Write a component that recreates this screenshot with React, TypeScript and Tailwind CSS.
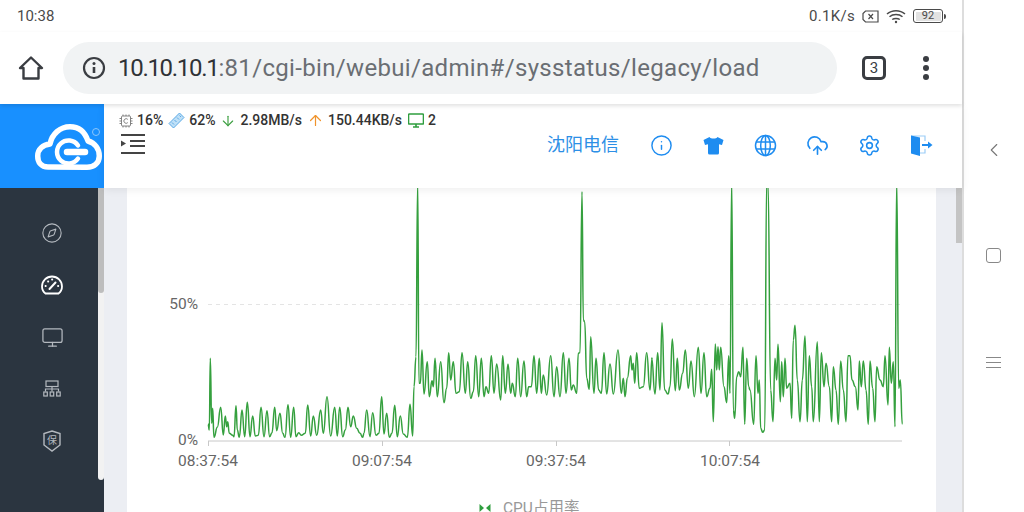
import React from "react";
import { ArrowDown, ArrowUp, ChevronLeft, CloudUpload, Compass, Info, Monitor, Settings } from "lucide-react";

const seg1: number[][] = [[24,432],[28,450],[31,235],[35,430],[38,385],[42,472],[52,442],[62,382],[70,465],[76,408],[80,440],[83,425],[88,460],[98,466],[102,470],[108,377],[112,450],[118,472],[126,390],[134,470],[142,367],[150,470],[158,408],[166,468],[175,466],[183,382],[192,470],[201,392],[209,470],[216,458],[224,382],[230,452],[240,400],[248,460],[255,472],[264,374],[272,472],[281,382],[288,470],[296,458],[304,466],[316,460],[323,375],[332,468],[340,408],[350,466],[362,390],[370,460],[381,350],[392,468],[404,382],[412,468],[419,382],[428,470],[436,450],[444,382],[452,440],[460,408],[470,445],[480,460],[488,472],[492,460],[500,390],[510,470],[518,398],[528,466],[537,460],[545,350],[552,462],[560,400],[568,472],[576,460],[584,376],[592,470],[601,408],[610,462],[622,472],[630,373],[638,468]];
const seg2: number[][] = [[42,620],[48,530],[53,10],[57,610],[61,610],[66,510],[72,642],[82,545],[88,650],[96,602],[100,620],[105,535],[112,650],[122,545],[132,668],[140,625],[146,518],[152,600],[160,545],[168,640],[178,635],[186,518],[196,640],[203,545],[212,655],[220,635],[227,527],[236,650],[244,535],[252,650],[258,620],[266,640],[274,527],[282,640],[290,552],[302,660],[308,527],[316,640],[324,552],[332,640],[337,610],[346,650],[353,535],[362,650],[372,543],[380,650],[386,620],[394,620],[402,527],[410,640],[418,535],[424,640],[430,585],[440,645],[452,527],[462,650],[470,560],[480,650],[490,518],[498,640],[507,535],[514,630],[520,615],[530,640],[535,520],[540,518],[546,35],[550,420],[554,425],[560,595],[568,628],[572,470],[582,640],[588,535],[596,630],[604,640],[612,518],[620,642],[630,552],[640,642],[654,510],[664,640],[670,595],[675,650],[682,595],[692,527],[696,570],[700,550],[704,610],[710,518],[718,625],[730,620],[740,518],[750,630],[756,535]];
const seg3: number[][] = [[0,625],[5,535],[15,642],[23,518],[30,630],[36,428],[44,630],[54,642],[60,620],[67,477],[76,632],[82,535],[88,630],[98,580],[106,510],[115,625],[123,543],[133,650],[145,502],[153,640],[162,518],[170,650],[180,625],[185,568],[190,725],[196,492],[200,570],[204,500],[208,570],[212,502],[222,620],[230,668],[236,527],[240,640],[245,5],[250,690],[254,715],[260,590],[266,575],[272,590],[279,502],[284,733],[290,535],[296,620],[300,630],[311,733],[318,527],[324,640],[328,600],[332,745],[338,757],[344,750],[350,5],[354,10],[362,630],[369,725],[375,535],[380,600],[384,493],[391,665],[395,545],[400,650],[405,535],[410,625],[420,610],[425,715],[430,480],[435,436],[442,600],[450,725],[457,600],[465,468],[472,725],[478,527],[485,620],[490,725],[502,485],[508,725],[514,518],[522,620],[528,550],[538,620],[545,725],[550,560],[558,630],[565,733],[572,543],[580,630],[588,725],[594,527],[600,527],[606,600],[616,620],[624,690],[628,543],[634,620],[640,543],[648,630],[655,733],[660,543],[668,625],[675,725],[680,560],[690,600],[700,620],[705,527],[714,675],[718,502],[724,610],[730,545],[735,740],[740,5],[746,625],[751,600],[757,733]];

const pts = [
  ...seg1.map(([x, y]) => [200 + x / 3, 280 + y / 3]),
  ...seg2.map(([x, y]) => [400 + x / 3, 180 + y / 3]),
  ...seg3.filter(([x]) => x > 0).map(([x, y]) => [650 + x / 3, 180 + y / 3]),
];

const linePath = pts
  .map(([x, y], i) => {
    if (i === 0) return `M${x.toFixed(1)} ${y.toFixed(1)}`;
    const [px, py] = pts[i - 1];
    const mx = (px + x) / 2;
    return `C${mx.toFixed(1)} ${py.toFixed(1)} ${mx.toFixed(1)} ${y.toFixed(1)} ${x.toFixed(1)} ${y.toFixed(1)}`;
  })
  .join("");

const fontCjk = "[font-family:Roboto,'Noto_Sans_CJK_SC',sans-serif]";

function HomeIcon() {
  return (
    <svg width="26" height="26" viewBox="0 0 26 26" fill="none" stroke="#3a3d42" strokeWidth="2.4" strokeLinejoin="round">
      <path d="M2 13 13 2.5 24 13h-3.5v10.5h-15V13z" />
    </svg>
  );
}

function ChipIcon() {
  return (
    <svg width="14" height="14" viewBox="0 0 14 14" fill="none" stroke="#777" strokeWidth="0.9">
      <rect x="2.5" y="2" width="9" height="10" rx="1" />
      <path d="M4 .5v1.5M7 .5v1.5M10 .5v1.500M4 12v1.500M7 12v1.500M10 12v1.500M.5 4.500H2.500M.5 7H2.500M.5 9.500H2.500M11.500 4.500H13.500M11.500 7H13.500M11.500 9.500H13.500" />
      <path d="M8.800 5.400A2.300 2.300 0 1 0 8.800 8.600" />
    </svg>
  );
}

function RamIcon() {
  return (
    <svg width="17" height="17" viewBox="0 0 17 17" fill="#bfe0f7" stroke="#5aa9e6" strokeWidth="1">
      <path d="M1 11.500 11.500 1 16 5.500 5.500 16z" />
      <path d="M4 10.500 6 12.500M6.500 8 8.500 10M9 5.500 11 7.500M11.500 3.500 13 5" />
    </svg>
  );
}

function ShirtIcon() {
  return (
    <svg width="21" height="19" viewBox="0 0 21 19" fill="#1e8cf0">
      <path d="M6.500 1C7.500 3 13.500 3 14.500 1L20.500 4 19 9l-3-.8V17a1.500 1.500 0 0 1-1.500 1.500h-8A1.500 1.500 0 0 1 5 17V8.200L2 9 .5 4z" />
    </svg>
  );
}

function GlobeIcon() {
  return (
    <svg width="23" height="23" viewBox="0 0 23 23" fill="none" stroke="#1e8cf0" strokeWidth="1.500">
      <circle cx="11.500" cy="11.500" r="10" />
      <ellipse cx="11.500" cy="11.500" rx="4.800" ry="10" />
      <path d="M11.500 1.500v20M2 8h19M2 15h19" />
    </svg>
  );
}

function ExitIcon() {
  return (
    <svg width="23" height="23" viewBox="0 0 23 23" fill="none">
      <path d="M1 2h14v5M15 15v4H9" stroke="#9ccdf7" strokeWidth="1.200" />
      <path d="M1 1.500 10 3.500V22L1 19.500z" fill="#1e8cf0" />
      <path d="M12 11h7" stroke="#1e8cf0" strokeWidth="2" />
      <path d="M18 7.500 22.500 11 18 14.500z" fill="#1e8cf0" />
    </svg>
  );
}

function GaugeIcon() {
  return (
    <svg width="22" height="20" viewBox="0 0 22 20" fill="none" stroke="#fff" strokeWidth="1.800" strokeLinecap="round">
      <path d="M4.500 18.500h13C19.500 17 21 14.500 21 11.500a10 10 0 0 0-20 0C1 14.500 2.500 17 4.500 18.500z" />
      <path d="M8.500 14 14.500 7.500" strokeWidth="2" />
      <path d="M4.500 11h.3M7 6.500h.3M11 4.500h.3M17 11h.3" />
    </svg>
  );
}

function NetworkIcon() {
  return (
    <svg width="18" height="18" viewBox="0 0 18 18" fill="none" stroke="#b4b9bf" strokeWidth="1.200">
      <rect x="3" y="1" width="12" height="5.500" />
      <path d="M9 6.500v5M2.500 11.500v-2.500h13v2.500" />
      <rect x=".8" y="12" width="3.500" height="4" />
      <rect x="7.200" y="12" width="3.500" height="4" />
      <rect x="13.700" y="12" width="3.500" height="4" />
    </svg>
  );
}

function ShieldIcon() {
  return (
    <div className="relative w-[18px] h-[22px] flex items-center justify-center">
      <svg className="absolute inset-0" width="18" height="22" viewBox="0 0 18 22" fill="none" stroke="#b4b9bf" strokeWidth="1.400">
        <path d="M9 1 17 3.500V15L9 21 1 15V3.500z" />
      </svg>
      <span className={`relative text-[10px] leading-none text-[#b4b9bf] ${fontCjk}`}>保</span>
    </div>
  );
}

function Logo() {
  return (
    <svg width="72" height="56" viewBox="0 0 72 56" fill="none" stroke="#fff">
      <path d="M16 50C9 50 5.700 45 5.700 39C5.700 32 11 28 18 27C20 17 28 9.700 38 9.700C47 9.700 53 15 56 24C63 26 67.300 32 67.300 39C67.300 46 62 50.300 55 50.300z" strokeWidth="5.500" strokeLinejoin="round" />
      <path d="M46 28.500A11.500 11.500 0 1 0 46 41.500" strokeWidth="4.500" strokeLinecap="round" />
      <path d="M35 35H53" strokeWidth="6.500" strokeLinecap="round" />
      <circle cx="64" cy="15" r="3.500" stroke="#8cc6fb" strokeWidth="1" />
    </svg>
  );
}

function Stat({ icon, text }: { icon: React.ReactNode; text?: string }) {
  return (
    <div className="flex items-center gap-[4px]">
      {icon}
      {text && <span>{text}</span>}
    </div>
  );
}

export default function App() {
  const sideItems = [
    <Compass key="a" size={22} strokeWidth={1.2} color="#b4b9bf" />,
    <GaugeIcon key="b" />,
    <Monitor key="c" size={23} strokeWidth={1.300} color="#b4b9bf" />,
    <NetworkIcon key="d" />,
    <ShieldIcon key="e" />,
  ];
  const headerIcons = [
    <Info key="1" size={23} strokeWidth={1.500} color="#1e8cf0" />,
    <ShirtIcon key="2" />,
    <GlobeIcon key="3" />,
    <CloudUpload key="4" size={23} strokeWidth={1.700} color="#1e8cf0" />,
    <Settings key="5" size={23} strokeWidth={1.600} color="#1e8cf0" />,
    <ExitIcon key="6" />,
  ];
  return (
    <div className={`w-[1024px] h-[512px] overflow-hidden flex bg-white ${fontCjk}`}>
      <div className="w-[964px] h-full flex flex-col border-r-2 border-[#dddddd]">
        {/* Status bar */}
        <div className="h-[32px] shrink-0 flex items-center justify-between pl-[17px] pr-[16px] text-[15px] text-[#4a4a4a]">
          <span>10:38</span>
          <div className="flex items-center gap-[7px]">
            <span className="tracking-[0.3px]">0.1K/s</span>
            <svg width="17" height="13" viewBox="0 0 17 13" fill="none" stroke="#4a4a4a" strokeWidth="1.200">
              <path d="M3.500 1H16V12H3.500L1 9.500V3.500z" />
              <path d="M6.500 4 11 9M11 4 6.500 9" />
            </svg>
            <svg width="20" height="15" viewBox="0 0 20 15" fill="none" stroke="#4a4a4a" strokeWidth="1.500">
              <path d="M1 5C6 .5 14 .5 19 5M3.500 7.800C7 4.800 13 4.800 16.500 7.800M6.200 10.500C8.200 9 11.800 9 13.800 10.500" />
              <circle cx="10" cy="13" r="1.200" fill="#4a4a4a" stroke="none" />
            </svg>
            <div className="flex items-center">
              <div className="w-[30px] h-[14px] rounded-[3px] border-[1.500px] border-[#4a4a4a] p-[1.500px] flex">
                <div className="w-full bg-[#e2e2e2] text-[11px] leading-[8px] text-center text-[#4a4a4a]">92</div>
              </div>
              <div className="w-[2px] h-[5px] ml-[1px] bg-[#4a4a4a] rounded-r-sm" />
            </div>
          </div>
        </div>
        {/* Browser toolbar */}
        <div className="h-[72px] shrink-0 flex items-center pl-[18px] pr-[28px] shadow-[0_2px_4px_rgba(0,0,0,0.12)] relative z-20 bg-white">
          <HomeIcon />
          <div className="ml-[19px] w-[774px] h-[52px] rounded-[26px] bg-[#f1f3f4] flex items-center pl-[19px]">
            <svg width="24" height="24" viewBox="0 0 24 24" fill="none" stroke="#3a3d42" strokeWidth="2.200" className="shrink-0">
              <circle cx="12" cy="12" r="10" />
              <path d="M12 11v6" strokeWidth="2.600" />
              <circle cx="12" cy="7.500" r="1.500" fill="#3a3d42" stroke="none" />
            </svg>
            <div className="ml-[12px] text-[24px] leading-none whitespace-nowrap text-[#6a6e73] tracking-[0.33px]">
              <span className="text-[#2f3236] tracking-[-1.300px]">10.10.10.1</span>:81/cgi-bin/webui/admin#/sysstatus/legacy/load
            </div>
          </div>
          <div className="ml-[25px] w-[24px] h-[24px] rounded-[5px] border-[3px] border-[#3a3d42] flex items-center justify-center text-[15px] text-[#3a3d42]">3</div>
          <div className="ml-[37px] flex flex-col gap-[3.500px]">
            <div className="w-[5.500px] h-[5.500px] rounded-full bg-[#3a3d42]" />
            <div className="w-[5.500px] h-[5.500px] rounded-full bg-[#3a3d42]" />
            <div className="w-[5.500px] h-[5.500px] rounded-full bg-[#3a3d42]" />
          </div>
        </div>
        {/* App */}
        <div className="flex-1 flex min-h-0">
          <div className="w-[104px] shrink-0 flex flex-col">
            <div className="h-[84px] shrink-0 bg-[#1890ff] flex items-end justify-end pb-[15px]">
              <Logo />
            </div>
            <div className="flex-1 flex bg-[#2b3540] min-h-0">
              <div className="flex-1 flex flex-col pt-[19px] pl-[6px]">
                {sideItems.map((icon, i) => (
                  <div key={i} className="h-[52px] shrink-0 flex items-center justify-center">
                    {icon}
                  </div>
                ))}
              </div>
              <div className="w-[6px] h-[292px] bg-[#f2f2f2] rounded-b-sm">
                <div className="h-[105px] bg-[#bdbdbd] rounded-b-sm" />
              </div>
            </div>
          </div>
          <div className="flex-1 flex flex-col min-w-0">
            <div className="h-[84px] shrink-0 bg-white shadow-[0_2px_8px_rgba(0,0,0,0.07)] relative z-10 pl-[15px] pr-[15px] flex flex-col">
              <div className="flex items-center h-[32px] text-[14px] font-medium text-[#333] gap-[5px] whitespace-nowrap pt-[1px]">
                <Stat icon={<ChipIcon />} text="16%" />
                <Stat icon={<RamIcon />} text="62%" />
                <Stat icon={<ArrowDown size={16} color="#3a9e3f" strokeWidth={1.700} />} text="2.98MB/s" />
                <Stat icon={<ArrowUp size={17} color="#f0932b" strokeWidth={1.700} />} text="150.44KB/s" />
                <div className="flex items-center gap-[4px] ml-[1px]">
                  <svg width="16" height="15" viewBox="0 0 16 15">
                    <rect x=".5" y="1" width="15" height="10" rx="1" fill="#fff" stroke="#2f9e3f" strokeWidth="1.600" />
                    <path d="M5 14h6M8 11v3" stroke="#2f9e3f" strokeWidth="1.600" />
                  </svg>
                  <span>2</span>
                </div>
              </div>
              <div className="flex items-center justify-between">
                <svg width="26" height="22" viewBox="0 0 26 22" fill="none" stroke="#444" strokeWidth="1.800" className="-mt-[13px] ml-[1px]">
                  <path d="M1 2h24M10 8h15M10 13h15M1 20h24" />
                  <path d="M1 7.500 6 10.500 1 13.500z" fill="#444" stroke="none" />
                </svg>
                <div className="flex items-center h-[40px] -mt-[11px]">
                  <span className="text-[18px] text-[#2d8fe6] mr-[16px] leading-none">沈阳电信</span>
                  {headerIcons.map((icon, i) => (
                    <div key={i} className="w-[52px] flex items-center justify-center">
                      {icon}
                    </div>
                  ))}
                </div>
              </div>
            </div>
            <div className="flex-1 flex bg-[#eceef3] pl-[23px] min-h-0">
              <div className="w-[809px] h-full bg-white shrink-0">
                <svg width="809" height="324" viewBox="127 188 809 324" className="block">
                  <g fontSize="15.500" fill="#666" fontFamily="Roboto, sans-serif">
                    <text x="198" y="309" textAnchor="end">50%</text>
                    <text x="198" y="445" textAnchor="end">0%</text>
                    <text x="208" y="466" textAnchor="middle">08:37:54</text>
                    <text x="382" y="466" textAnchor="middle">09:07:54</text>
                    <text x="556" y="466" textAnchor="middle">09:37:54</text>
                    <text x="730" y="466" textAnchor="middle">10:07:54</text>
                  </g>
                  <path d="M208 304.500H902" stroke="#e4e4e4" strokeDasharray="4 4" />
                  <path d="M208 441H902M208.500 441v5M382.500 441v5M556.500 441v5M729.500 441v5" stroke="#c8c8c8" strokeWidth="1" />
                  <path d={linePath} fill="none" stroke="#35a03e" strokeWidth="1.500" strokeLinejoin="round" />
                  <path d="M479.500 504v8l4.500-4zM490.500 504v8l-4.500-4z" fill="#2f9e3f" />
                  <text x="503" y="513" fontSize="15.500" fill="#999" fontFamily="Roboto, 'Noto Sans CJK SC', sans-serif">CPU占用率</text>
                </svg>
              </div>
              <div className="ml-auto w-[6px] h-[55px] bg-[#c4c4c4]" />
            </div>
          </div>
        </div>
      </div>
      {/* Right navigation */}
      <div className="flex-1 flex flex-col items-center">
        <div className="h-[150px] flex items-end">
          <ChevronLeft size={22} strokeWidth={1.200} color="#777" className="translate-y-[11px]" />
        </div>
        <div className="-ml-[2px] mt-[98px] w-[15px] h-[15px] rounded-[3px] border border-[#888]" />
        <div className="-ml-[2px] mt-[94px] flex flex-col gap-[4px]">
          <div className="w-[15px] h-px bg-[#888]" />
          <div className="w-[15px] h-px bg-[#888]" />
          <div className="w-[15px] h-px bg-[#888]" />
        </div>
      </div>
    </div>
  );
}
